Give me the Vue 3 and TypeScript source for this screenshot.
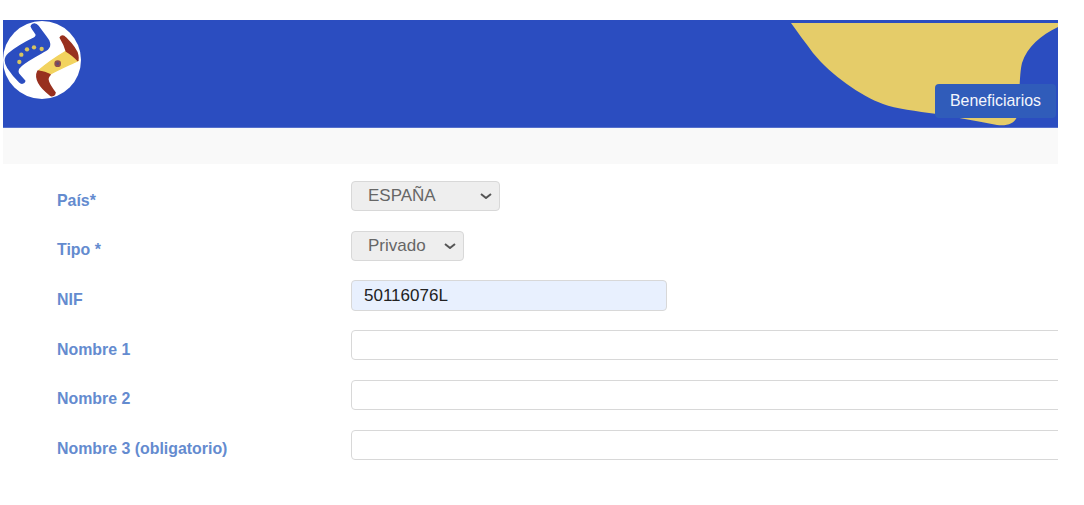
<script setup lang="ts">
interface Field {
  label: string
  value?: string
  filled?: boolean
}

const selects = [
  { label: 'País*', value: 'ESPAÑA', cls: 'pais' },
  { label: 'Tipo *', value: 'Privado', cls: 'tipo' },
]
const fields: Field[] = [
  { label: 'NIF', value: '50116076L', filled: true },
  { label: 'Nombre 1' },
  { label: 'Nombre 2' },
  { label: 'Nombre 3 (obligatorio)' },
]
const stars = [
  [65, 133],
  [82, 117],
  [103, 111],
  [126, 116],
  [59, 155],
]
</script>

<template>
  <div class="page">
    <header class="banner">
      <svg class="wave" viewBox="0 0 267 107" aria-hidden="true">
        <path
          d="M0 3 H267 V7 C250 15 236 27 231 43 C228 55 229 80 226 97 C223 104 216 106 206 105 C185 101 165 97 146 94 C125 91 105 89 92 84 C70 76 40 55 22 33 C14 22 7 13 0 3 Z"
          fill="#e5cc69"
        />
      </svg>
      <svg class="logo" viewBox="10 32 234 234" aria-hidden="true">
        <circle cx="127" cy="149" r="117" fill="#fff" />
        <path
          d="M95 48 C98 40 108 38 115 48 C125 62 140 80 147 92 C152 104 148 114 138 120 C115 133 85 148 65 165 C55 173 52 182 56 190 C62 198 70 206 75 212 C73 219 65 220 60 215 C48 203 35 187 25 172 C14 155 14 142 28 130 C50 112 80 95 103 84 C112 78 112 72 106 66 C101 60 97 54 95 48 Z"
          fill="#2b4dc0"
          stroke="#2b4dc0"
          stroke-width="5"
          stroke-linejoin="round"
        />
        <circle v-for="(s, i) in stars" :key="i" :cx="s[0]" :cy="s[1]" r="6.5" fill="#d9c55f" />
        <path
          d="M118 180 C140 160 170 140 200 122 C215 130 228 140 236 150 C205 165 175 178 150 192 Z"
          fill="#f2d35f"
          stroke="#f2d35f"
          stroke-width="4"
          stroke-linejoin="round"
        />
        <path
          d="M182 82 C185 76 192 76 197 82 C215 100 232 120 234 135 C235 140 235 146 234 150 C226 140 213 130 200 122 C196 108 190 95 182 82 Z"
          fill="#98301f"
          stroke="#98301f"
          stroke-width="5"
          stroke-linejoin="round"
        />
        <path
          d="M115 182 C128 184 140 187 151 193 C144 200 142 205 146 214 C150 225 158 236 166 247 C165 255 158 258 153 255 C140 245 125 232 118 218 C111 205 110 192 115 182 Z"
          fill="#98301f"
          stroke="#98301f"
          stroke-width="5"
          stroke-linejoin="round"
        />
        <circle cx="174" cy="160" r="10" fill="#8d4c4e" />
        <circle cx="174" cy="160" r="4" fill="#5d4a7a" />
      </svg>
      <button class="section-btn" type="button">Beneficiarios</button>
    </header>
    <div class="band"></div>

    <form class="form" @submit.prevent>
      <template v-for="s in selects" :key="s.label">
        <label class="label">{{ s.label }}</label>
        <div class="control">
          <div class="select-wrap" :class="s.cls">
            <select class="select" disabled>
              <option>{{ s.value }}</option>
            </select>
            <svg class="chevron" viewBox="0 0 12 6" aria-hidden="true">
              <path d="M1 1 L6 5 L11 1" fill="none" stroke="#555" stroke-width="2" />
            </svg>
          </div>
        </div>
      </template>

      <template v-for="f in fields" :key="f.label">
        <label class="label">{{ f.label }}</label>
        <div class="control">
          <input class="input" :class="{ nif: f.filled }" type="text" :value="f.value ?? ''" />
        </div>
      </template>
    </form>
  </div>
</template>

<style scoped>
.page {
  width: 1055px;
  margin: 20px 0 0 3px;
  overflow: hidden;
  font-family: "Liberation Sans", Arial, sans-serif;
}

.banner {
  position: relative;
  height: 108px;
  background: #2b4dc0;
  display: flex;
  align-items: flex-start;
  justify-content: flex-end;
  padding: 64px 2px 0 0;
  box-sizing: border-box;
  border-bottom: 1px solid #5570cc;
}

.wave {
  position: absolute;
  top: 0;
  left: 788px;
  width: 267px;
  height: 107px;
}

.logo {
  position: absolute;
  top: 1px;
  left: 0;
  width: 78px;
  height: 78px;
}

.section-btn {
  position: relative;
  width: 121px;
  height: 34px;
  border: none;
  border-radius: 4px;
  background: #305cba;
  color: #f4f6fc;
  font-family: inherit;
  font-size: 15.9px;
  padding: 0;
}

.band {
  height: 36px;
  background: #f9f9f9;
}

.form {
  display: grid;
  grid-template-columns: 294px 1fr;
  grid-auto-rows: 30.3px;
  row-gap: 19.42px;
  padding: 17px 0 0 54px;
  align-items: center;
}

.label {
  color: #648bcf;
  font-size: 15.9px;
  font-weight: 700;
  padding-top: 9px;
}

.control {
  height: 100%;
  min-width: 0;
}

.select-wrap {
  position: relative;
  height: 100%;
}

.pais {
  width: 149px;
}

.tipo {
  width: 113px;
}

.select {
  appearance: none;
  display: block;
  width: 100%;
  height: 100%;
  box-sizing: border-box;
  border: 1px solid #d8d8d8;
  border-radius: 4px;
  background-color: #eeeeee;
  color: #666;
  font-family: inherit;
  font-size: 17px;
  opacity: 1;
  padding: 0 0 1px 16px;
}

.chevron {
  position: absolute;
  top: 12px;
  right: 8px;
  width: 12px;
  height: 6px;
}

.input {
  display: block;
  width: calc(100% + 20px);
  height: 100%;
  box-sizing: border-box;
  border: 1px solid #d8d8d8;
  border-radius: 4px;
  background: #fff;
  color: #222;
  font-family: inherit;
  font-size: 17px;
  padding: 0 12px;
  outline: none;
}

.nif {
  width: 316px;
  background: #e8f0fe;
}
</style>
